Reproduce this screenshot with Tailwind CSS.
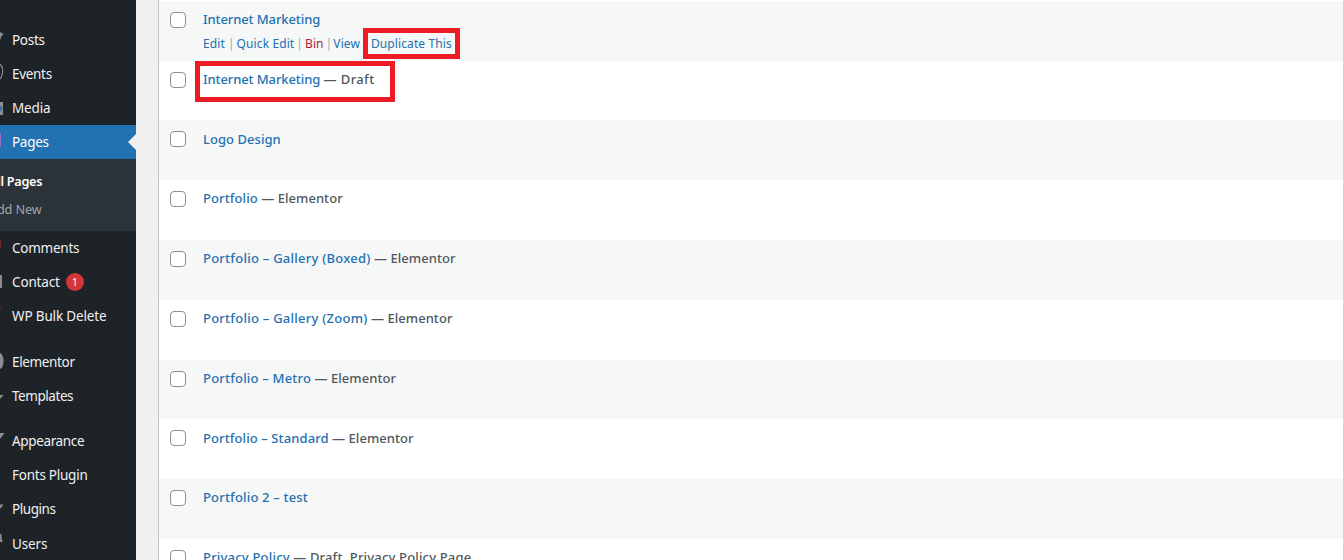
<!DOCTYPE html>
<html>
<head>
<meta charset="utf-8">
<script src="https://cdn.jsdelivr.net/npm/@tailwindcss/browser@4"></script>
</head>
<body class="m-0 overflow-hidden bg-[#f0f0f1] font-['Noto_Sans','Open_Sans',sans-serif] text-[13px]">
<div class="flex h-[560px] w-[1343px] overflow-hidden">
  <aside class="w-[136px] shrink-0 bg-[#1d2327] pt-[23px] text-[13.5px] leading-[18px] tracking-[-0.15px] text-[#f0f0f1]">
    <div class="relative flex h-[34px] items-center pl-3 tracking-[-0.3px]">
      <svg class="absolute left-0 top-[8px]" width="5" height="12" viewBox="0 0 5 12"><path d="M0 1L3.5 3L1.5 5.5L0 9Z" fill="#8a8e92"/></svg>Posts</div>
    <div class="relative flex h-[34px] items-center pl-3 tracking-[-0.3px]">
      <svg class="absolute left-0 top-[6px]" width="5" height="18" viewBox="0 0 5 18"><path d="M0 1C3 4 3 7 2.5 10C2 13 1 15 0 16" fill="none" stroke="#8a8e92" stroke-width="1.2"/></svg>Events</div>
    <div class="relative flex h-[34px] items-center pl-3">
      <span class="absolute left-0 top-[11px] h-[13px] w-[3px] bg-[#8a8e92]"></span>
      <span class="absolute left-0 top-[15px] h-[5px] w-[2px] bg-[#3f6fa8]"></span>Media</div>
    <div class="relative flex h-[34px] items-center bg-[#2271b1] pl-3 tracking-[-0.3px] text-white">
      <span class="absolute left-0 top-[8px] h-[14px] w-px bg-[#9a6fc0]"></span>Pages
      <span class="absolute right-0 top-[9px] h-0 w-0 border-y-[8px] border-r-[8px] border-y-transparent border-r-[#f0f0f1]"></span>
    </div>
    <div class="flex h-[72px] flex-col justify-center gap-[10px] overflow-hidden bg-[#2c3338] text-[12.7px]">
      <div class="-ml-[11px] whitespace-nowrap font-semibold tracking-[-0.3px] text-white">All Pages</div>
      <div class="-ml-[11px] whitespace-nowrap text-[#a0a5aa]">Add New</div>
    </div>
    <div class="relative flex h-[34px] items-center pl-3 tracking-[-0.25px]">
      <span class="absolute left-0 top-[9px] h-[8px] w-px bg-[#6e2430]"></span>Comments</div>
    <div class="relative flex h-[34px] items-center pl-3">
      <span class="absolute left-0 top-[10px] h-[13px] w-[2px] bg-[#8a8e92]"></span>Contact <span class="ml-[6px] flex h-[18px] w-[18px] items-center justify-center rounded-full bg-[#d63638] text-[10px] tracking-normal text-white">1</span></div>
    <div class="relative flex h-[34px] items-center pl-3">
      <span class="absolute left-0 top-[9px] h-[2px] w-px bg-[#6e2430]"></span>WP Bulk Delete</div>
    <div class="h-3"></div>
    <div class="relative flex h-[34px] items-center pl-3 tracking-[-0.35px]">
      <svg class="absolute left-0 top-[8px]" width="4" height="16" viewBox="0 0 4 16"><path d="M0 0C2.5 1 3.5 4 3.5 8C3.5 12 2.5 15 0 16Z" fill="#8a8e92"/></svg>Elementor</div>
    <div class="relative flex h-[34px] items-center pl-3 tracking-[-0.45px]">
      <svg class="absolute left-0 top-[15px]" width="4" height="6" viewBox="0 0 4 6"><path d="M0 1H3.5L0 5Z" fill="#8a8e92"/></svg>Templates</div>
    <div class="h-[11px]"></div>
    <div class="relative flex h-[34px] items-center pl-3 tracking-[-0.35px]">
      <svg class="absolute left-0 top-[9px]" width="5" height="7" viewBox="0 0 5 7"><path d="M0 0H4.5L0 6Z" fill="#8a8e92"/></svg>Appearance</div>
    <div class="flex h-[34px] items-center pl-3 tracking-[-0.25px]">Fonts Plugin</div>
    <div class="relative flex h-[34px] items-center pl-3 tracking-[-0.45px]">
      <svg class="absolute left-0 top-[12px]" width="4" height="6" viewBox="0 0 4 6"><path d="M0 0.5H3.5L0 5Z" fill="#8a8e92"/></svg>Plugins</div>
    <div class="relative mt-px flex h-[34px] items-center pl-3">
      <svg class="absolute left-0 top-[7px]" width="3" height="9" viewBox="0 0 3 9"><path d="M0 0H1.5V3L2.5 8H0Z" fill="#8a8e92"/></svg>Users</div>
  </aside>
  <main class="ml-[22px] min-w-0 flex-1 border-l border-[#c3c4c7] bg-white pt-px text-[#50575e]">
    <div class="relative flex h-[60px] bg-[#f6f7f7]">
      <input type="checkbox" class="ml-[11px] mt-[11px] h-4 w-4 appearance-none rounded-[4px] border border-[#8c8f94] bg-white">
      <div class="ml-[17px] pt-[9px] leading-[18px]">
        <a class="font-medium tracking-[-0.1px] text-[#2271b1]">Internet Marketing</a>
        <div class="mt-[8px] flex items-center whitespace-nowrap text-[12px] leading-[16px] tracking-[0.1px] text-[#a7aaad]">
          <a class="text-[#2271b1]">Edit</a><span class="ml-[3px] mr-[2px]">|</span><a class="text-[#2271b1]">Quick Edit</a><span class="mx-[2px]">|</span><a class="text-[#b3203a]">Bin</a><span class="ml-[2px] mr-[1px]">|</span><a class="text-[#2271b1]">View</a><a class="ml-[11px] text-[#2271b1]">Duplicate This</a>
        </div>
      </div>
      <div class="absolute left-[204px] top-[27px] h-[31px] w-[97px] border-[5px] border-[#ed1c24]"></div>
    </div>
    <div class="relative flex h-[59px] bg-white">
      <input type="checkbox" class="ml-[11px] mt-[11px] h-4 w-4 appearance-none rounded-[4px] border border-[#8c8f94] bg-white">
      <div class="ml-[17px] pt-[9px] font-medium leading-[18px]"><a class="tracking-[-0.1px] text-[#2271b1]">Internet Marketing</a> <span class="tracking-[0.4px]">— Draft</span></div>
      <div class="absolute left-[36px] top-0 h-[41px] w-[200px] border-[5px] border-[#ed1c24]"></div>
    </div>
    <div class="flex h-[60px] bg-[#f6f7f7]">
      <input type="checkbox" class="ml-[11px] mt-[11px] h-4 w-4 appearance-none rounded-[4px] border border-[#8c8f94] bg-white">
      <div class="ml-[17px] pt-[10px] font-medium leading-[18px]"><a class="tracking-[0.05px] text-[#2271b1]">Logo Design</a></div>
    </div>
    <div class="flex h-[60px] bg-white">
      <input type="checkbox" class="ml-[11px] mt-[11px] h-4 w-4 appearance-none rounded-[4px] border border-[#8c8f94] bg-white">
      <div class="ml-[17px] pt-[9px] font-medium leading-[18px]"><a class="tracking-[0.1px] text-[#2271b1]">Portfolio</a> <span class="tracking-[0.05px]">— Elementor</span></div>
    </div>
    <div class="flex h-[60px] bg-[#f6f7f7]">
      <input type="checkbox" class="ml-[11px] mt-[11px] h-4 w-4 appearance-none rounded-[4px] border border-[#8c8f94] bg-white">
      <div class="ml-[17px] pt-[9px] font-medium leading-[18px]"><a class="tracking-[0.25px] text-[#2271b1]">Portfolio – Gallery (Boxed)</a> <span class="tracking-[0.05px]">— Elementor</span></div>
    </div>
    <div class="flex h-[60px] bg-white">
      <input type="checkbox" class="ml-[11px] mt-[11px] h-4 w-4 appearance-none rounded-[4px] border border-[#8c8f94] bg-white">
      <div class="ml-[17px] pt-[9px] font-medium leading-[18px]"><a class="tracking-[0.25px] text-[#2271b1]">Portfolio – Gallery (Zoom)</a> <span class="tracking-[0.05px]">— Elementor</span></div>
    </div>
    <div class="flex h-[59px] bg-[#f6f7f7]">
      <input type="checkbox" class="ml-[11px] mt-[11px] h-4 w-4 appearance-none rounded-[4px] border border-[#8c8f94] bg-white">
      <div class="ml-[17px] pt-[9px] font-medium leading-[18px]"><a class="tracking-[0.2px] text-[#2271b1]">Portfolio – Metro</a> <span class="tracking-[0.05px]">— Elementor</span></div>
    </div>
    <div class="flex h-[60px] bg-white">
      <input type="checkbox" class="ml-[11px] mt-[11px] h-4 w-4 appearance-none rounded-[4px] border border-[#8c8f94] bg-white">
      <div class="ml-[17px] pt-[10px] font-medium leading-[18px]"><a class="tracking-[0.1px] text-[#2271b1]">Portfolio – Standard</a> <span class="tracking-[0.05px]">— Elementor</span></div>
    </div>
    <div class="flex h-[60px] bg-[#f6f7f7]">
      <input type="checkbox" class="ml-[11px] mt-[11px] h-4 w-4 appearance-none rounded-[4px] border border-[#8c8f94] bg-white">
      <div class="ml-[17px] pt-[9px] font-medium leading-[18px]"><a class="tracking-[0.18px] text-[#2271b1]">Portfolio 2 – test</a></div>
    </div>
    <div class="flex h-[60px] bg-white">
      <input type="checkbox" class="ml-[11px] mt-[11px] h-4 w-4 appearance-none rounded-[4px] border border-[#8c8f94] bg-white">
      <div class="ml-[17px] pt-[9px] font-medium leading-[18px]"><a class="tracking-[0.2px] text-[#2271b1]">Privacy Policy</a> <span class="tracking-[0.17px]">— Draft, Privacy Policy Page</span></div>
    </div>
  </main>
</div>
</body>
</html>
